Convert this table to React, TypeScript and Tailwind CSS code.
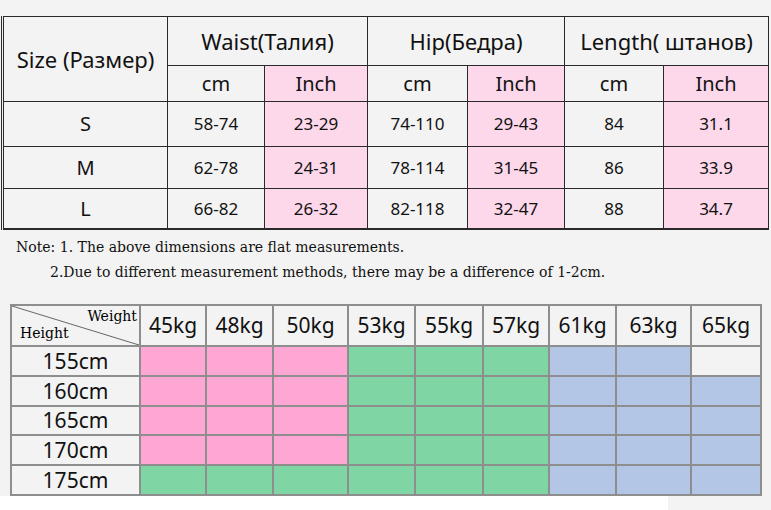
import React from "react";

const sans = "font-['Noto_Sans',sans-serif]";
const serif = "font-['DejaVu_Serif',serif]";

const sizeRows = [
  ["S", "58-74", "23-29", "74-110", "29-43", "84", "31.1"],
  ["M", "62-78", "24-31", "78-114", "31-45", "86", "33.9"],
  ["L", "66-82", "26-32", "82-118", "32-47", "88", "34.7"],
];

const weights = ["45kg", "48kg", "50kg", "53kg", "55kg", "57kg", "61kg", "63kg", "65kg"];

const P = "bg-[#fea7d4]";
const G = "bg-[#7fd5a3]";
const B = "bg-[#b3c6e6]";
const E = "bg-[#f3f3f3]";

const fit: [string, string[]][] = [
  ["155cm", [P, P, P, G, G, G, B, B, E]],
  ["160cm", [P, P, P, G, G, G, B, B, B]],
  ["165cm", [P, P, P, G, G, G, B, B, B]],
  ["170cm", [P, P, P, G, G, G, B, B, B]],
  ["175cm", [G, G, G, G, G, G, B, B, B]],
];

const SizeTable = () => {
  const cell = "flex items-center justify-center text-[#111]";
  return (
    <div className="ml-[1px] mt-[16px] w-fit border-l-[3px] border-double border-[#2a2a2a]">
      <div className="grid grid-cols-[163px_96px_102px_99px_96px_98px_104px] grid-rows-[48px_35px_44px_41px_39px] gap-px bg-[#2a2a2a] pt-px pr-px pb-[2px]">
        <div className={`${cell} row-span-2 bg-[#f3f3f3] text-[22px]`}>Size (Размер)</div>
        <div className={`${cell} col-span-2 bg-[#f3f3f3] text-[22px]`}>Waist(Талия)</div>
        <div className={`${cell} col-span-2 bg-[#f3f3f3] text-[22px]`}>Hip(Бедра)</div>
        <div className={`${cell} col-span-2 bg-[#f3f3f3] text-[22px]`}>Length( штанов)</div>
        {[0, 1, 2].map((i) => (
          <React.Fragment key={i}>
            <div className={`${cell} bg-[#f3f3f3] text-[20px]`}>cm</div>
            <div className={`${cell} bg-[#fdd7ea] text-[20px]`}>Inch</div>
          </React.Fragment>
        ))}
        {sizeRows.map((row) =>
          row.map((v, j) => (
            <div
              key={row[0] + j}
              className={`${cell} ${j > 0 && j % 2 === 0 ? "bg-[#fdd7ea]" : "bg-[#f3f3f3]"} ${j === 0 ? "text-[20px]" : "text-[17px]"}`}
            >
              {v}
            </div>
          ))
        )}
      </div>
    </div>
  );
};

const Notes = () => (
  <div className={`${serif} mt-[5px] text-[14px] leading-[25px] text-[#111]`}>
    <div className="pl-[16px]">Note: 1. The above dimensions are flat measurements.</div>
    <div className="pl-[50px]">2.Due to different measurement methods, there may be a difference of 1-2cm.</div>
  </div>
);

const FitTable = () => {
  const cell = "flex items-center justify-center text-[#111]";
  return (
    <div className="ml-[10px] mt-[19px] w-fit">
      <div className="grid grid-cols-[127px_64px_65px_73px_65px_66px_64px_65px_73px_68px] grid-rows-[39px_28px_28px_27px_28px_28px] gap-[2px] bg-[#8e8e8e] p-[2px]">
        <div className="relative bg-[#f3f3f3]">
          <svg className="absolute inset-0" width="127" height="39">
            <line x1="0" y1="0" x2="127" y2="39" stroke="#666" strokeWidth="1" />
          </svg>
          <span className={`${serif} absolute right-[2px] top-[3px] text-[14px] leading-none`}>Weight</span>
          <span className={`${serif} absolute left-[8px] bottom-[5px] text-[14px] leading-none`}>Height</span>
        </div>
        {weights.map((w) => (
          <div key={w} className={`${cell} bg-[#f3f3f3] text-[21px]`}>{w}</div>
        ))}
        {fit.map(([h, cols]) => (
          <React.Fragment key={h}>
            <div className={`${cell} bg-[#f3f3f3] text-[21px] leading-none`}>{h}</div>
            {cols.map((c, i) => (
              <div key={i} className={c} />
            ))}
          </React.Fragment>
        ))}
      </div>
    </div>
  );
};

export default function App() {
  return (
    <div className={`${sans} relative h-[510px] w-[771px] overflow-hidden bg-[#f3f3f3]`}>
      <SizeTable />
      <Notes />
      <FitTable />
      <div className="absolute bottom-0 left-0 h-[14px] w-[668px] bg-white" />
    </div>
  );
}
